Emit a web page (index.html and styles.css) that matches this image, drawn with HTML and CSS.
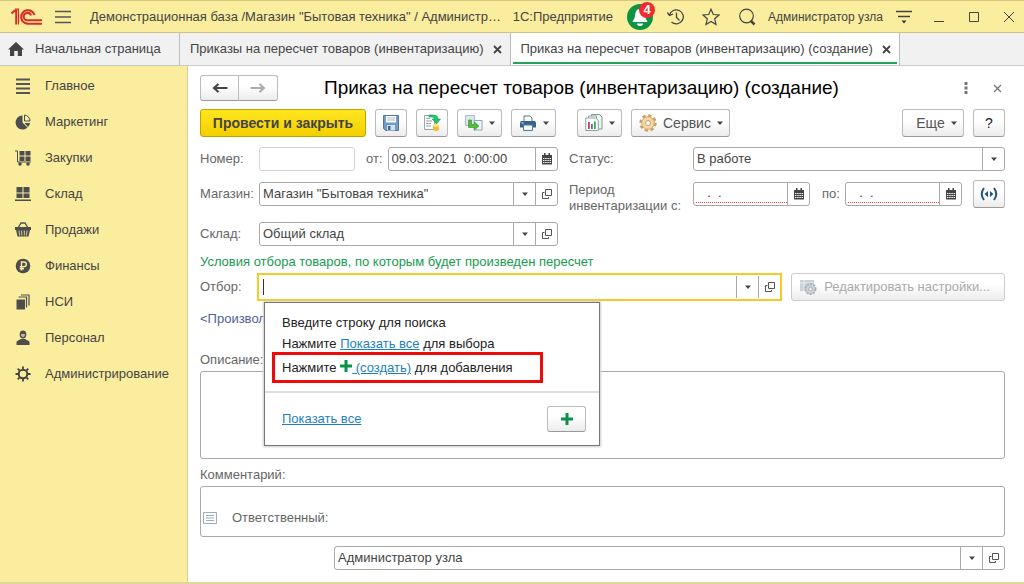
FILE: index.html
```html
<!DOCTYPE html>
<html lang="ru">
<head>
  <meta charset="UTF-8">
  <meta name="viewport" content="width=device-width, initial-scale=1.0">
  <title>Приказ на пересчет товаров</title>
  <link rel="stylesheet" href="styles.css">
</head>
<body>
  <!-- Общие иконки -->
  <svg class="sprite" aria-hidden="true">
    <symbol id="i-open" viewBox="0 0 12 12"><path d="M4.500 1.500h6v6h-6z M3.500 4.500H1.500v6h6V9" fill="none" stroke="#555"/></symbol>
    <symbol id="i-calendar" viewBox="0 0 12 12"><path d="M1 2h10v9.500H1z" fill="#444"/><path d="M3 0h1.500v2.500H3zM7.500 0H9v2.500H7.500z" fill="#444"/><path d="M2 5.500h8M2 7.500h8M2 9.500h8" stroke="#fff" stroke-width="1" stroke-dasharray="1.400 .8"/></symbol>
    <symbol id="i-arrow" viewBox="0 0 6 4"><path d="M0 .5h6L3 4z" fill="#444"/></symbol>
    <symbol id="i-plus" viewBox="0 0 12 12"><path d="M4.500 0h3v4.500H12v3H7.500V12h-3V7.500H0v-3h4.500z" fill="#0a9348"/></symbol>
  </svg>

  <header class="titlebar">
    <svg class="logo" width="32" height="18" viewBox="0 0 32 18" fill="none" stroke="#dc2b27">
      <path d="M.5 5.500L4 2.500h1.200V16.500" stroke-width="2"/>
      <path d="M4 1.200H7.500V16.500" stroke-width="1.200"/>
      <path d="M23.500 7A6.800 6.800 0 1 0 17 15.800H31" stroke-width="2.100"/>
      <path d="M20 7.500A3.700 3.700 0 1 0 17 12.300H31" stroke-width="2"/>
    </svg>
    <button class="bar-btn menu" aria-label="Меню"><svg width="16" height="14" viewBox="0 0 16 14"><path d="M0 1.500h16M0 7h16M0 12.500h16" stroke="#555" stroke-width="1.300"/></svg></button>
    <span class="base-name">Демонстрационная база /Магазин "Бытовая техника" / Администр…</span>
    <span class="product">1С:Предприятие</span>
    <button class="bar-btn bell" aria-label="Уведомления">
      <svg width="26" height="26" viewBox="0 0 26 26"><circle cx="13" cy="13" r="13" fill="#0b9444"/><path d="M13 5c-4 0-4.500 3-5 7-.4 3-2 4-2.500 6h15c-.5-2-2-3-2.500-6-.5-4-1-7-5-7z" fill="#fff"/><path d="M10 19.500h6a3 2.500 0 0 1-6 0z" fill="#fff"/></svg>
      <span class="badge">4</span>
    </button>
    <button class="bar-btn history" aria-label="История"><svg width="18" height="18" viewBox="0 0 18 18" fill="none" stroke="#444" stroke-width="1.300"><path d="M2.500 7A7 7 0 1 1 4.500 14M.3 4.500L2.500 7.500L6 6M9.500 4.500V9.500L12.500 12.500"/></svg></button>
    <button class="bar-btn star" aria-label="Избранное"><svg width="18" height="18" viewBox="0 0 18 18"><path d="M9 1.200l2.300 5.300 5.700.5-4.300 3.800 1.300 5.700L9 13.500 4 16.500l1.300-5.700L1 7l5.700-.5z" fill="none" stroke="#444" stroke-width="1.200"/></svg></button>
    <button class="bar-btn search" aria-label="Поиск"><svg width="18" height="18" viewBox="0 0 18 18" fill="none" stroke="#444"><circle cx="8.500" cy="8" r="6.800" stroke-width="1.200"/><path d="M12.500 12.500L16.500 16.500" stroke-width="2.500"/></svg></button>
    <span class="user">Администратор узла</span>
    <button class="bar-btn service" aria-label="Настройки"><svg width="16" height="14" viewBox="0 0 16 14"><path d="M0 1.500h16M2 6.500h12" stroke="#444" stroke-width="1.300"/><path d="M5.500 10.500h5L8 13.500z" fill="#333"/></svg></button>
    <button class="bar-btn win" aria-label="Свернуть"><svg width="12" height="12" viewBox="0 0 12 12"><path d="M1 10.500h10" stroke="#444"/></svg></button>
    <button class="bar-btn win" aria-label="Развернуть"><svg width="12" height="12" viewBox="0 0 12 12"><path d="M1.500 1.500h9v9h-9z" fill="none" stroke="#444"/></svg></button>
    <button class="bar-btn win" aria-label="Закрыть"><svg width="12" height="12" viewBox="0 0 12 12"><path d="M1 1l10 10M11 1L1 11" stroke="#444"/></svg></button>
  </header>

  <nav class="tabs">
    <a href="#" class="tab home">
      <svg width="16" height="14" viewBox="0 0 16 14"><path d="M8 0l8 7.500h-2V14H9.800V9H6.200v5H2V7.500H0z" fill="#444"/></svg>
      Начальная страница
    </a>
    <a href="#" class="tab">Приказы на пересчет товаров (инвентаризацию)<svg class="tab-close" width="9" height="9" viewBox="0 0 9 9"><path d="M1 1l7 7M8 1L1 8" stroke="#444" stroke-width="1.800"/></svg></a>
    <a href="#" class="tab active">Приказ на пересчет товаров (инвентаризацию) (создание)<svg class="tab-close" width="9" height="9" viewBox="0 0 9 9"><path d="M1 1l7 7M8 1L1 8" stroke="#444" stroke-width="1.800"/></svg></a>
  </nav>

  <div class="workspace">
    <aside class="sidebar">
      <a href="#"><svg width="16" height="16" viewBox="0 0 16 16"><path d="M1 1.500h14M1 6h14M1 10.500h14M1 15h14" stroke="#555" stroke-width="1.800"/></svg>Главное</a>
      <a href="#"><svg width="16" height="16" viewBox="0 0 16 16"><path d="M7.500 1.500A7 7 0 1 0 12.500 13.500L7.500 8.500z" fill="#4d4d4d"/><path d="M9.500 1a6 6 0 0 1 5.500 6H9.500z" fill="none" stroke="#4d4d4d"/><path d="M9.500 9h5.500a6 6 0 0 1-2 4z" fill="#4d4d4d"/></svg>Маркетинг</a>
      <a href="#"><svg width="16" height="16" viewBox="0 0 16 16"><path d="M0 1h2.500v11H16" fill="none" stroke="#4d4d4d"/><path d="M4.500 1h5v4.500h-5zM10.500 1h5v4.500h-5zM4.500 6.500h5V11h-5zM10.500 6.500h5V11h-5z" fill="#4d4d4d"/><circle cx="5" cy="14" r="1.800" fill="#4d4d4d"/><circle cx="13" cy="14" r="1.800" fill="#4d4d4d"/></svg>Закупки</a>
      <a href="#"><svg width="16" height="16" viewBox="0 0 16 16"><path d="M1.500 1h6v5.500h-6zM8.500 1h6v5.500h-6zM1.500 7.500h6V12h-6zM8.500 7.500h6V12h-6zM0 13.500h16V15H0z" fill="#4d4d4d"/></svg>Склад</a>
      <a href="#"><svg width="16" height="16" viewBox="0 0 16 16"><path d="M3 6l3-5h4l3 5" fill="none" stroke="#4d4d4d" stroke-width="1.300"/><path d="M0 5h16v3h-1l-1.500 6.500h-11L1 8H0z" fill="#4d4d4d"/><path d="M4 8.500l.5 5M6.700 8.500v5M9.300 8.500v5M12 8.500l-.5 5" stroke="#fbed9e" stroke-width=".8"/></svg>Продажи</a>
      <a href="#"><svg width="16" height="16" viewBox="0 0 16 16"><circle cx="8" cy="8" r="7.300" fill="#4d4d4d"/><path d="M6.500 12.500V4H9a2.300 2.300 0 0 1 0 4.700H4.800M4.800 10.700H9" fill="none" stroke="#fbed9e" stroke-width="1.400"/></svg>Финансы</a>
      <a href="#"><svg width="16" height="16" viewBox="0 0 16 16"><path d="M1.500 5.500h8.500V15.500H1.500z" fill="#4d4d4d"/><path d="M3.500 3h8v10.500M6 1h8v10.500" fill="none" stroke="#4d4d4d" stroke-width="1.200"/></svg>НСИ</a>
      <a href="#"><svg width="16" height="16" viewBox="0 0 16 16"><ellipse cx="8" cy="4.500" rx="3.300" ry="4" fill="#4d4d4d"/><path d="M6 4h4a2 3 0 0 1-4 0z" fill="#c9bf87"/><path d="M1.500 15v-2.500c0-2 3-2.500 4.500-3.500h4c1.500 1 4.500 1.500 4.500 3.500V15z" fill="#4d4d4d"/></svg>Персонал</a>
      <a href="#"><svg width="16" height="16" viewBox="0 0 16 16" fill="none" stroke="#444"><circle cx="8" cy="8" r="4.300" stroke-width="2"/><path d="M8 .5v3M8 12.500v3M.5 8h3M12.500 8h3M2.700 2.700l2 2M11.300 11.300l2 2M2.700 13.300l2-2M11.300 4.700l2-2" stroke-width="1.800"/></svg>Администрирование</a>
    </aside>

    <main class="form">
      <div class="form-head">
        <div class="nav-buttons">
          <button class="btn" aria-label="Назад"><svg width="16" height="10" viewBox="0 0 16 10"><path d="M15.500 5H3M6.500 1L2 5l4.500 4" fill="none" stroke="#444" stroke-width="2.200"/></svg></button>
          <button class="btn" aria-label="Вперед"><svg width="16" height="10" viewBox="0 0 16 10"><path d="M.5 5H13M9.500 1L14 5l-4.500 4" fill="none" stroke="#aaa" stroke-width="2"/></svg></button>
        </div>
        <h1>Приказ на пересчет товаров (инвентаризацию) (создание)</h1>
        <button class="bar-btn more-dots" aria-label="Еще действия"><svg width="4" height="12" viewBox="0 0 4 12"><path d="M.5 0h3v3h-3zM.5 4.500h3v3h-3zM.5 9h3v3h-3z" fill="#777"/></svg></button>
        <button class="bar-btn" aria-label="Закрыть форму"><svg width="9" height="9" viewBox="0 0 9 9"><path d="M1 1l7 7M8 1L1 8" stroke="#777" stroke-width="1.300"/></svg></button>
      </div>

      <div class="toolbar">
        <button class="btn primary">Провести и закрыть</button>
        <button class="btn square" aria-label="Записать"><svg width="16" height="16" viewBox="0 0 16 16"><path d="M.5.5h15v15h-13l-2-2z" fill="#6f9cc5" stroke="#55789d"/><path d="M3 1h10v6.500H3z" fill="#fff"/><path d="M4 3h8M4 5h8" stroke="#a9bdd0"/><path d="M4 10h8v5.500H4z" fill="#d5e0ea"/><path d="M5 11h2.500v4H5z" fill="#456b92"/></svg></button>
        <button class="btn square" aria-label="Провести"><svg width="18" height="18" viewBox="0 0 18 18"><path d="M1.500 1.500h10v14h-10z" fill="#fff" stroke="#9aa5ad"/><path d="M3 4.500h4M3 7h6M3 9.500h5M3 12h5" stroke="#8f9aa5"/><path d="M6 1h4q5 0 5 4h2.500L13.500 10 9 5h2.500q0-2-2.500-2H6z" fill="#25c66f" stroke="#139c50" stroke-width=".6"/><path d="M10 11.500h6v4.500q-3 2-6 0z" fill="#f0bd38"/><ellipse cx="13" cy="11.500" rx="3" ry="1.400" fill="#ffe27b"/></svg></button>
        <button class="btn drop" aria-label="Создать на основании"><svg width="18" height="16" viewBox="0 0 18 16"><path d="M.5.5h9v10h-9z" fill="#dbe6f0" stroke="#a9bccd"/><path d="M9 5.500h8v9.500H9z" fill="#f0f5fa" stroke="#8da7bf"/><path d="M3.500 5h3v4.500h3V7L14 11l-4.500 4v-2.500h-6z" fill="#4fbd3a" stroke="#329325" stroke-width=".6"/></svg><svg width="6" height="4"><use href="#i-arrow"/></svg></button>
        <button class="btn drop" aria-label="Печать"><svg width="18" height="16" viewBox="-1 0 18 16"><path d="M4 1h6l2 2v4H4z" fill="#fff" stroke="#53789b"/><path d="M1 6h14l1 1.500v5H0v-5z" fill="#38648c"/><path d="M1.500 8h2" stroke="#fff"/><path d="M3.500 10h9v5.500h-9z" fill="#f2f6f9" stroke="#53789b"/></svg><svg width="6" height="4"><use href="#i-arrow"/></svg></button>
        <button class="btn drop reports" aria-label="Отчеты"><svg width="18" height="18" viewBox="0 0 18 18"><path d="M6.500.5h8l2.500 2.500v12H6.500z" fill="#eef4ee" stroke="#79a285"/><path d="M3.500 2h8v12h-8z" fill="#fff" stroke="#8ba1ad"/><path d="M.8 4h10l2.500 2.500v10H.8z" fill="#fff" stroke="#8ba1ad"/><path d="M3 8h1.800v7H3z" fill="#d33c3c"/><path d="M6 10h1.800v5H6z" fill="#4874a8"/><path d="M9 7.500h1.800V15H9z" fill="#3cae4e"/></svg><svg width="6" height="4"><use href="#i-arrow"/></svg></button>
        <button class="btn drop"><svg width="18" height="18" viewBox="0 0 18 18"><circle cx="9" cy="9" r="7.300" fill="none" stroke="#c99e62" stroke-width="2.800" stroke-dasharray="3.100 2.630"/><circle cx="9" cy="9" r="6.300" fill="#f6d8a8" stroke="#d0a76b"/><circle cx="9" cy="9" r="2.500" fill="#fff" stroke="#c99e62"/></svg>Сервис<svg width="6" height="4"><use href="#i-arrow"/></svg></button>
        <button class="btn drop more">Еще<svg width="6" height="4"><use href="#i-arrow"/></svg></button>
        <button class="btn square help">?</button>
      </div>

      <div class="row">
        <div class="left">
          <label for="number">Номер:</label>
          <div class="field number"><input type="text" id="number"></div>
          <label for="date" class="from">от:</label>
          <div class="field grow"><input type="text" id="date" value="09.03.2021  0:00:00"><button aria-label="Календарь"><svg width="12" height="12"><use href="#i-calendar"/></svg></button></div>
        </div>
        <div class="right">
          <label for="status">Статус:</label>
          <div class="field grow"><select id="status"><option>В работе</option></select><span class="pick"><svg width="6" height="4"><use href="#i-arrow"/></svg></span></div>
        </div>
      </div>

      <div class="row tall">
        <div class="left">
          <label for="shop">Магазин:</label>
          <div class="field grow"><select id="shop"><option>Магазин "Бытовая техника"</option></select><span class="pick"><svg width="6" height="4"><use href="#i-arrow"/></svg></span><button aria-label="Открыть магазин"><svg width="12" height="12"><use href="#i-open"/></svg></button></div>
        </div>
        <div class="right">
          <label for="period-from" class="period">Период инвентаризации с:</label>
          <div class="field grow"><input type="text" id="period-from" class="required" value="  .  ."><button aria-label="Календарь"><svg width="12" height="12"><use href="#i-calendar"/></svg></button></div>
          <label for="period-to" class="to">по:</label>
          <div class="field grow"><input type="text" id="period-to" class="required" value="  .  ."><button aria-label="Календарь"><svg width="12" height="12"><use href="#i-calendar"/></svg></button></div>
          <button class="btn square interval" aria-label="Выбрать период"><svg width="18" height="14" viewBox="0 0 18 14"><path d="M4 1Q-.5 7 4 13M14 1q4.500 6 0 12" fill="none" stroke="#23567c" stroke-width="2"/><path d="M8 4v6L4.500 7zM10 4v6l3.500-3z" fill="#23567c"/></svg></button>
        </div>
      </div>

      <div class="row">
        <div class="left">
          <label for="stock">Склад:</label>
          <div class="field grow"><select id="stock"><option>Общий склад</option></select><span class="pick"><svg width="6" height="4"><use href="#i-arrow"/></svg></span><button aria-label="Открыть склад"><svg width="12" height="12"><use href="#i-open"/></svg></button></div>
        </div>
      </div>

      <h2>Условия отбора товаров, по которым будет произведен пересчет</h2>

      <div class="row filter">
        <label for="filter">Отбор:</label>
        <div class="field focused grow">
          <span class="caret"></span>
          <input type="text" id="filter">
          <button aria-label="Выбрать"><svg width="6" height="4"><use href="#i-arrow"/></svg></button>
          <button aria-label="Открыть отбор"><svg width="12" height="12"><use href="#i-open"/></svg></button>

          <!-- Подсказка под полем отбора -->
          <div class="popup">
            <div class="popup-body">
              <p>Введите строку для поиска</p>
              <p>Нажмите <a href="#">Показать все</a> для выбора</p>
              <p class="create">Нажмите <svg width="12" height="12"><use href="#i-plus"/></svg><a href="#">&nbsp;(создать)</a> для добавления</p>
            </div>
            <div class="popup-foot">
              <a href="#">Показать все</a>
              <button class="btn" aria-label="Создать"><svg width="12" height="12"><use href="#i-plus"/></svg></button>
            </div>
          </div>
        </div>
        <button class="btn edit" disabled><svg width="18" height="18" viewBox="0 0 18 18"><path d="M1 2h14v11H1z" fill="#ccd2d7"/><path d="M1 5h14M5 2v11" stroke="#e6eaed"/><circle cx="11.500" cy="11" r="5" fill="#cfd4d8" stroke="#a9b1b8" stroke-width="2" stroke-dasharray="2.200 1"/><circle cx="11.500" cy="11" r="1.800" fill="#eee" stroke="#a9b1b8"/></svg>Редактировать настройки...</button>
      </div>

      <a href="#" class="custom">&lt;Произвол</a>

      <label for="description" class="block-label">Описание:</label>
      <textarea id="description" class="description"></textarea>

      <label for="comment" class="block-label comment-label">Комментарий:</label>
      <div class="comment-box">
        <textarea id="comment" class="comment"></textarea>
        <label for="responsible"><svg width="14" height="12" viewBox="0 0 14 12"><path d="M.5.5h13v11H.5z" fill="#fff" stroke="#9eacba"/><path d="M3 3.500h8M3 6h8M3 8.500h8" stroke="#9eacba"/></svg>Ответственный:</label>
      </div>

      <div class="field responsible"><select id="responsible"><option>Администратор узла</option></select><span class="pick"><svg width="6" height="4"><use href="#i-arrow"/></svg></span><button aria-label="Открыть ответственного"><svg width="12" height="12"><use href="#i-open"/></svg></button></div>
    </main>
  </div>
</body>
</html>
```

FILE: styles.css
```css
* {
  box-sizing: border-box;
}

body {
  margin: 0;
  min-height: 100vh;
  display: flex;
  flex-direction: column;
  font-family: 'Liberation Sans', Arial, sans-serif;
  font-size: 13px;
  line-height: 16px;
  color: #444;
  background: #fff;
  border-bottom: 2px solid #e0d898;
}

svg {
  display: block;
  flex: none;
}

.sprite {
  display: none;
}

button, input, select, textarea {
  font: inherit;
  color: inherit;
  margin: 0;
}

a {
  color: inherit;
  text-decoration: none;
}

/* Заголовок окна */
.titlebar {
  display: flex;
  align-items: center;
  height: 33px;
  padding: 0 9px 0 11px;
  background: #fbed9e;
  border-top: 1px solid #d6c77c;
  border-bottom: 1px solid #cfc284;
}

.bar-btn {
  padding: 0;
  border: none;
  background: none;
  cursor: pointer;
}

.menu {
  margin: 0 19px 0 12px;
}

.base-name {
  flex: 1;
  overflow: hidden;
  white-space: nowrap;
  text-overflow: ellipsis;
}

.product {
  margin: 0 14px 0 6px;
}

.bell {
  position: relative;
}

.badge {
  position: absolute;
  top: -2px;
  right: -2px;
  width: 16px;
  height: 16px;
  border-radius: 50%;
  background: #ef2b2d;
  color: #fff;
  font-weight: bold;
}

.history {
  margin-left: 14px;
}

.star {
  margin: 0 18px 0 17px;
}

.user {
  margin: 0 13px 0 12px;
  font-size: 12px;
}

.win {
  margin-left: 23px;
}

.service + .win {
  margin-left: 21px;
}

/* Вкладки */
.tabs {
  display: flex;
  height: 33px;
  background: #f1f1f1;
  border-bottom: 1px solid #c8c8c8;
}

.tab {
  display: flex;
  align-items: center;
  padding: 0 8px 0 10px;
  border-right: 1px solid #bbb;
  white-space: nowrap;
}

.home {
  gap: 11px;
  width: 180px;
  padding-left: 8px;
}

.tab-close {
  margin-left: 9px;
}

.tab.active {
  position: relative;
  background: #fff;
}

.tab.active::after {
  content: '';
  position: absolute;
  left: 2px;
  right: 2px;
  bottom: 1px;
  height: 2px;
  background: #22a35a;
}

.workspace {
  flex: 1;
  display: flex;
}

.sidebar {
  width: 188px;
  padding-top: 2px;
  background: #fbed9e;
  border-right: 1px solid #d8cf98;
}

.sidebar a {
  display: flex;
  align-items: center;
  gap: 14px;
  height: 36px;
  padding-left: 15px;
}

/* Кнопки */
.btn {
  display: flex;
  align-items: center;
  justify-content: center;
  height: 28px;
  padding: 0;
  border: 1px solid #bbb;
  border-bottom-color: #999;
  border-radius: 3px;
  background: linear-gradient(#fff 40%, #ececec);
  color: #555;
  cursor: pointer;
}

.primary {
  width: 166px;
  background: linear-gradient(#ffe620, #f3cf00);
  border-color: #c2a200;
  color: #444;
  font-size: 14px;
  font-weight: bold;
}

.square {
  width: 32px;
}

.drop {
  gap: 6px;
  padding: 0 6px 0 7px;
  font-size: 14px;
}

.help {
  color: #222;
  font-size: 14px;
}

/* Форма */
.form {
  flex: 1;
  display: flex;
  flex-direction: column;
  padding: 9px 19px 12px 12px;
}

.form-head {
  display: flex;
  align-items: center;
  height: 26px;
}

.nav-buttons {
  display: flex;
  margin-right: 46px;
}

.nav-buttons .btn {
  width: 39px;
  height: 26px;
}

.nav-buttons .btn:first-child {
  border-radius: 3px 0 0 3px;
}

.nav-buttons .btn:last-child {
  border-left: none;
  border-radius: 0 3px 3px 0;
}

h1 {
  flex: 1;
  margin: 0;
  font-size: 19px;
  line-height: 24px;
  font-weight: normal;
  color: #000;
}

.more-dots {
  margin-right: 25px;
}

.form-head .bar-btn:last-child {
  margin-right: 3px;
}

.toolbar {
  display: flex;
  gap: 9px;
  margin: 8px 0 10px;
}

.reports {
  margin-left: 12px;
}

.more {
  width: 62px;
  margin-left: auto;
  padding-left: 13px;
}

.row {
  display: flex;
  gap: 11px;
}

.left, .right {
  display: flex;
  align-items: center;
  height: 24px;
}

.left {
  flex: 0 1 358px;
}

.right {
  flex: 1;
}

.left label:first-child {
  width: 59px;
}

.right label:first-child {
  width: 124px;
}

label {
  flex: none;
  color: #666;
}

.field {
  display: flex;
  height: 24px;
  border: 1px solid #aaa;
  border-radius: 3px;
  background: #fff;
}

.grow {
  flex: 1;
}

.field input, .field select {
  flex: 1;
  min-width: 0;
  width: 0;
  padding: 0 3px;
  border: none;
  outline: none;
  background: none;
  appearance: none;
}

.field button, .pick {
  display: flex;
  align-items: center;
  justify-content: center;
  width: 22px;
  padding: 0;
  border: none;
  border-left: 1px solid #aaa;
  background: none;
}

.number {
  width: 96px;
  border-color: #d5d5d5;
}

.from {
  margin: 0 5px 0 11px;
}

.tall {
  margin: 11px 0 16px;
}

.period {
  align-self: flex-start;
  padding-right: 10px;
}

.field .required {
  margin: 0 0 2px 2px;
  padding-left: 4px;
  border-bottom: 1px dotted #e44;
}

.to {
  margin: 0 5px 0 12px;
}

.interval {
  margin-left: 11px;
}

h2 {
  margin: 8px 0 3px;
  font-size: 13px;
  font-weight: normal;
  color: #169b50;
}

.filter {
  align-items: center;
  gap: 0;
}

.filter > label {
  width: 57px;
}

.focused {
  position: relative;
  height: 28px;
  border: 2px solid #f9ca24;
  border-radius: 0;
}

.focused > button {
  margin: 1px 0;
}

.caret {
  width: 1px;
  margin: 4px 0 4px 4px;
  background: #333;
}

.edit {
  gap: 7px;
  margin-left: 9px;
  padding: 0 14px 0 7px;
  border-color: #ccc;
  color: #aaa;
}

/* Выпадающая подсказка */
.popup {
  position: absolute;
  top: 27px;
  left: 5px;
  z-index: 2;
  width: 336px;
  background: #fff;
  border: 1px solid #777;
  box-shadow: 0 0 2px 1px #ccc;
  color: #222;
}

.popup-body {
  padding: 9px 7px 8px;
  border-bottom: 2px solid #ddd;
}

.popup p {
  margin: 0;
  padding: 0 10px;
  line-height: 21px;
}

.popup a {
  color: #1e7fc0;
  text-decoration: underline;
}

.popup p.create {
  width: 271px;
  margin-top: -2px;
  padding: 0 7px;
  border: 3px solid #f00a0a;
  line-height: 25px;
}

.create svg {
  display: inline-block;
}

.popup-foot {
  display: flex;
  align-items: center;
  justify-content: space-between;
  height: 52px;
  padding: 0 13px 0 17px;
}

.popup .btn {
  width: 39px;
  height: 26px;
  border: 1px solid #bbb;
  border-bottom-color: #999;
  background: linear-gradient(#fff 40%, #ececec);
}

.custom {
  margin: 10px 0 25px;
  color: #4f5f96;
}

.block-label {
  margin-bottom: 3px;
}

textarea {
  display: block;
  width: 100%;
  border: 1px solid #aaa;
  border-radius: 3px;
  outline: none;
  resize: none;
}

.description {
  height: 88px;
}

.comment-label {
  margin-top: 8px;
}

.comment-box {
  position: relative;
}

.comment {
  height: 51px;
}

.comment-box label {
  position: absolute;
  left: 3px;
  top: 24px;
  display: flex;
  align-items: center;
  gap: 15px;
}

.responsible {
  margin: 9px 0 0 134px;
}
```
